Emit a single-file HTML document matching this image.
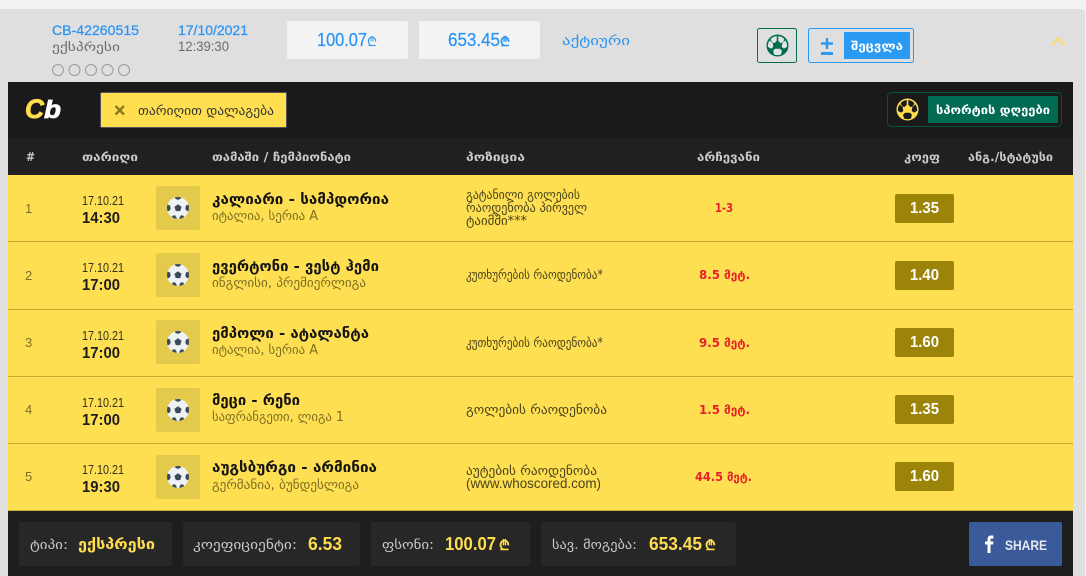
<!DOCTYPE html>
<html lang="ka"><head><meta charset="utf-8"><title>CB-42260515</title>
<style>
html,body{margin:0;padding:0;background:#f2f2f2;width:1086px;height:576px;overflow:hidden}
svg{display:block;position:absolute;left:0;top:0}
text{font-family:"Liberation Sans","DejaVu Sans",sans-serif;white-space:pre}
.g{font-family:"DejaVu Sans","Liberation Sans",sans-serif}
.b{font-weight:bold}
.blue{fill:#2a94f4}.grey{fill:#6b6b6b}
.m{stroke:currentColor;stroke-width:.25px}
.h{font-size:12px;fill:#c9c9c9;font-family:"DejaVu Sans",sans-serif;font-weight:bold}
.t{font-size:14px;font-weight:bold;fill:#141414;font-family:"DejaVu Sans",sans-serif}
.s{font-size:13px;fill:#7d6f22;font-family:"DejaVu Sans",sans-serif}
.p{font-size:13px;fill:#4a431a;font-family:"DejaVu Sans",sans-serif}
.d{font-size:13px;fill:#33301c}
.tm{font-size:16px;font-weight:bold;fill:#1c1c1c}
.n{font-size:13px;fill:#7d6f22}
.v{font-size:12px;font-weight:bold;fill:#e8202a;font-family:"DejaVu Sans",sans-serif}
.o{font-size:16px;font-weight:bold;fill:#fff}
.fl{font-size:13px;fill:#c9c9c9;font-family:"DejaVu Sans",sans-serif}
.fv{font-size:18px;font-weight:bold;fill:#ffdd4e}
</style></head><body>
<svg width="1086" height="576" viewBox="0 0 1086 576" xmlns="http://www.w3.org/2000/svg">
<defs>
<symbol id="ring" viewBox="0 0 24 24">
<circle cx="12" cy="12" r="11.5" fill="currentColor"/>
<path d="M12.800 2.100a10 10 0 0 1 6.300 3.200l-1.300 3.500-2.800.6-2.200-2.400z"/>
<path d="M11.200 2.100a10 10 0 0 0-6.300 3.200l1.300 3.500 2.800.6 2.200-2.400z"/>
<path d="M20.100 6.600a10 10 0 0 1 1.900 6.800l-3.300 1.800-2.300-1.600.5-3.700z"/>
<path d="M3.900 6.600a10 10 0 0 0-1.900 6.800l3.300 1.800 2.300-1.600-.5-3.700z"/>
<path d="M8.400 21.400a10 10 0 0 0 7.200 0l1-3.900-2-2.100H9.400l-2 2.100z"/>
<path d="M12 8.500l3.300 2.400-1.250 3.800h-4.100L8.700 10.900z" fill="currentColor"/>
</symbol>
<clipPath id="cb"><circle cx="12" cy="12" r="11"/></clipPath>
<symbol id="ball" viewBox="0 0 24 24">
<circle cx="12" cy="12" r="11" fill="#eef2f4"/>
<g clip-path="url(#cb)" fill="#3c4a57">
<path d="M12 8.300l3.600 2.600-1.400 4.200H9.800l-1.400-4.200z"/>
<path d="M8.500 0h7l-.8 2.700-2.700 1.200-2.700-1.200z"/>
<path d="M24 8v6.500l-2.800.8-1.900-2.300.6-3.500z"/>
<path d="M0 8v6.500l2.800.8 1.900-2.300-.6-3.500z"/>
<path d="M5.500 23l.8-3.200 2.800-.5 1.600 2.600-.3 2.500z"/>
<path d="M18.500 23l-.8-3.200-2.800-.5-1.600 2.600.3 2.500z"/>
</g>
</symbol>
</defs>

<rect width="1086" height="576" fill="#f2f2f2"/>
<path d="M0 9H1082a3 3 0 0 1 3 3V576H0z" fill="#dfdfdf"/>

<text x="52" y="35" font-size="14" class="blue m" color="#2a94f4" textLength="87" lengthAdjust="spacingAndGlyphs">CB-42260515</text>
<text x="52" y="51" font-size="12" class="grey g" textLength="68" lengthAdjust="spacingAndGlyphs">ექსპრესი</text>
<g fill="none" stroke="#9a9a9a"><circle cx="58" cy="70" r="5.5"/><circle cx="74.500" cy="70" r="5.5"/><circle cx="91" cy="70" r="5.500"/><circle cx="107.500" cy="70" r="5.500"/><circle cx="124" cy="70" r="5.500"/></g>
<text x="178" y="35" font-size="14" class="blue m" color="#2a94f4" textLength="70" lengthAdjust="spacingAndGlyphs">17/10/2021</text>
<text x="178" y="51" font-size="14" class="grey" textLength="51" lengthAdjust="spacingAndGlyphs">12:39:30</text>

<rect x="287" y="21" width="121" height="38" rx="2" fill="#f3f3f3"/>
<rect x="419" y="21" width="121" height="38" rx="2" fill="#f3f3f3"/>
<text x="317" y="46" font-size="18" class="blue m" color="#2a94f4" textLength="50" lengthAdjust="spacingAndGlyphs">100.07</text>
<text x="367" y="46" font-size="13" class="blue g">₾</text>
<text x="448" y="46" font-size="18" class="blue m" color="#2a94f4" textLength="52" lengthAdjust="spacingAndGlyphs">653.45</text>
<text x="500" y="46" font-size="13" class="blue g b">₾</text>
<text x="562" y="45" font-size="13" class="blue g" textLength="68" lengthAdjust="spacingAndGlyphs">აქტიური</text>

<rect x="757.500" y="28.500" width="39" height="34" rx="2" fill="none" stroke="#006b52"/>
<use href="#ring" x="766" y="34" width="23" height="23" fill="#dfe6e2" color="#006b52"/>
<rect x="808.500" y="28.500" width="105" height="34" rx="2" fill="none" stroke="#2b9af3"/>
<rect x="844" y="32" width="66" height="27" fill="#2b9af3"/>
<path d="M821 43.500h12M827 38v11" stroke="#2b9af3" stroke-width="2.400" fill="none"/>
<rect x="821" y="52" width="12" height="3" fill="#2b9af3"/>
<text x="851" y="50" font-size="12" font-weight="bold" fill="#fff" class="g" textLength="52" lengthAdjust="spacingAndGlyphs">შეცვლა</text>
<path d="M1052 45l6.500-6.500 6.500 6.500" fill="none" stroke="#ffdd4e" stroke-width="1.800"/>

<rect x="8" y="82" width="1065" height="56" fill="#1a1a1a"/>
<rect x="8" y="138" width="1065" height="37" fill="#202020"/>
<text x="25" y="118" font-size="27" font-weight="bold" font-style="italic" fill="#ffdd4e" stroke="#ffdd4e" stroke-width=".8" textLength="19" lengthAdjust="spacingAndGlyphs">C</text>
<text x="44" y="118" font-size="25" font-weight="bold" font-style="italic" fill="#fff" stroke="#fff" stroke-width=".8" textLength="17" lengthAdjust="spacingAndGlyphs">b</text>

<rect x="100.500" y="92.500" width="186" height="35" rx="1" fill="#ffdf4f" stroke="#555"/>
<path d="M115.500 106l8.500 8.500M124 106l-8.500 8.500" stroke="#8a7a1e" stroke-width="2.400" fill="none"/>
<text x="138" y="115" font-size="13" fill="#333" class="g" textLength="136" lengthAdjust="spacingAndGlyphs">თარიღით დალაგება</text>

<rect x="887.500" y="92.500" width="174" height="34" rx="4" fill="none" stroke="#00533f"/>
<use href="#ring" x="896" y="98" width="23" height="23" fill="#1a1a1a" color="#ffdd4e"/>
<rect x="928" y="96" width="130" height="27" fill="#006b52"/>
<text x="936" y="114" font-size="12" font-weight="bold" fill="#fff" class="g" textLength="114" lengthAdjust="spacingAndGlyphs">სპორტის დღეები</text>

<text x="26" y="161" class="h" textLength="9" lengthAdjust="spacingAndGlyphs">#</text>
<text x="82" y="161" class="h" textLength="56" lengthAdjust="spacingAndGlyphs">თარიღი</text>
<text x="212" y="161" class="h" textLength="139" lengthAdjust="spacingAndGlyphs">თამაში / ჩემპიონატი</text>
<text x="466" y="161" class="h" textLength="59" lengthAdjust="spacingAndGlyphs">პოზიცია</text>
<text x="697" y="161" class="h" textLength="63" lengthAdjust="spacingAndGlyphs">არჩევანი</text>
<text x="904" y="161" class="h" textLength="36" lengthAdjust="spacingAndGlyphs">კოეფ</text>
<text x="968" y="161" class="h" textLength="85" lengthAdjust="spacingAndGlyphs">ანგ./სტატუსი</text>

<rect x="8" y="175" width="1065" height="336" fill="#ffdf52"/>
<g fill="#c9ac2f"><rect x="8" y="241" width="1065" height="1"/><rect x="8" y="309" width="1065" height="1"/><rect x="8" y="376" width="1065" height="1"/><rect x="8" y="443" width="1065" height="1"/><rect x="8" y="510" width="1065" height="1"/></g>

<g fill="#e3ca4b">
<rect x="156" y="186" width="44" height="44" rx="2"/><rect x="156" y="253" width="44" height="44" rx="2"/><rect x="156" y="320" width="44" height="44" rx="2"/><rect x="156" y="388" width="44" height="44" rx="2"/><rect x="156" y="455" width="44" height="44" rx="2"/>
</g>
<use href="#ball" x="166" y="196" width="24" height="24"/><use href="#ball" x="166" y="263" width="24" height="24"/><use href="#ball" x="166" y="330" width="24" height="24"/><use href="#ball" x="166" y="398" width="24" height="24"/><use href="#ball" x="166" y="465" width="24" height="24"/>

<g fill="#9c8409">
<rect x="895" y="194" width="59" height="29" rx="2"/><rect x="895" y="261" width="59" height="29" rx="2"/><rect x="895" y="328" width="59" height="29" rx="2"/><rect x="895" y="395" width="59" height="29" rx="2"/><rect x="895" y="462" width="59" height="29" rx="2"/>
</g>
<text x="910" y="213" class="o" textLength="29" lengthAdjust="spacingAndGlyphs">1.35</text>
<text x="910" y="280" class="o" textLength="29" lengthAdjust="spacingAndGlyphs">1.40</text>
<text x="910" y="347" class="o" textLength="29" lengthAdjust="spacingAndGlyphs">1.60</text>
<text x="910" y="414" class="o" textLength="29" lengthAdjust="spacingAndGlyphs">1.35</text>
<text x="910" y="481" class="o" textLength="29" lengthAdjust="spacingAndGlyphs">1.60</text>

<text x="25" y="213" class="n">1</text>
<text x="82" y="205" class="d" textLength="42" lengthAdjust="spacingAndGlyphs">17.10.21</text>
<text x="82" y="223" class="tm" textLength="38" lengthAdjust="spacingAndGlyphs">14:30</text>
<text x="212" y="204" class="t" textLength="177" lengthAdjust="spacingAndGlyphs">კალიარი - სამპდორია</text>
<text x="212" y="220" class="s" textLength="106" lengthAdjust="spacingAndGlyphs">იტალია, სერია A</text>
<text x="466" y="199" class="p" textLength="114" lengthAdjust="spacingAndGlyphs">გატანილი გოლების</text>
<text x="466" y="212" class="p" textLength="121" lengthAdjust="spacingAndGlyphs">რაოდენობა პირველ</text>
<text x="466" y="225" class="p" textLength="61" lengthAdjust="spacingAndGlyphs">ტაიმში***</text>
<text x="715" y="212" class="v" textLength="18" lengthAdjust="spacingAndGlyphs">1-3</text>

<text x="25" y="280" class="n">2</text>
<text x="82" y="272" class="d" textLength="42" lengthAdjust="spacingAndGlyphs">17.10.21</text>
<text x="82" y="290" class="tm" textLength="38" lengthAdjust="spacingAndGlyphs">17:00</text>
<text x="212" y="271" class="t" textLength="167" lengthAdjust="spacingAndGlyphs">ევერტონი - ვესტ ჰემი</text>
<text x="212" y="287" class="s" textLength="154" lengthAdjust="spacingAndGlyphs">ინგლისი, პრემიერლიგა</text>
<text x="466" y="279" class="p" textLength="137" lengthAdjust="spacingAndGlyphs">კუთხურების რაოდენობა*</text>
<text x="699" y="279" class="v" textLength="51" lengthAdjust="spacingAndGlyphs">8.5 მეტ.</text>

<text x="25" y="347" class="n">3</text>
<text x="82" y="340" class="d" textLength="42" lengthAdjust="spacingAndGlyphs">17.10.21</text>
<text x="82" y="358" class="tm" textLength="38" lengthAdjust="spacingAndGlyphs">17:00</text>
<text x="212" y="338" class="t" textLength="157" lengthAdjust="spacingAndGlyphs">ემპოლი - ატალანტა</text>
<text x="212" y="354" class="s" textLength="106" lengthAdjust="spacingAndGlyphs">იტალია, სერია A</text>
<text x="466" y="347" class="p" textLength="137" lengthAdjust="spacingAndGlyphs">კუთხურების რაოდენობა*</text>
<text x="699" y="347" class="v" textLength="51" lengthAdjust="spacingAndGlyphs">9.5 მეტ.</text>

<text x="25" y="414" class="n">4</text>
<text x="82" y="407" class="d" textLength="42" lengthAdjust="spacingAndGlyphs">17.10.21</text>
<text x="82" y="425" class="tm" textLength="38" lengthAdjust="spacingAndGlyphs">17:00</text>
<text x="212" y="405" class="t" textLength="88" lengthAdjust="spacingAndGlyphs">მეცი - რენი</text>
<text x="212" y="421" class="s" textLength="132" lengthAdjust="spacingAndGlyphs">საფრანგეთი, ლიგა 1</text>
<text x="466" y="414" class="p" textLength="141" lengthAdjust="spacingAndGlyphs">გოლების რაოდენობა</text>
<text x="699" y="414" class="v" textLength="51" lengthAdjust="spacingAndGlyphs">1.5 მეტ.</text>

<text x="25" y="481" class="n">5</text>
<text x="82" y="474" class="d" textLength="42" lengthAdjust="spacingAndGlyphs">17.10.21</text>
<text x="82" y="492" class="tm" textLength="38" lengthAdjust="spacingAndGlyphs">19:30</text>
<text x="212" y="472" class="t" textLength="165" lengthAdjust="spacingAndGlyphs">აუგსბურგი - არმინია</text>
<text x="212" y="489" class="s" textLength="147" lengthAdjust="spacingAndGlyphs">გერმანია, ბუნდესლიგა</text>
<text x="466" y="475" class="p" textLength="131" lengthAdjust="spacingAndGlyphs">აუტების რაოდენობა</text>
<text x="466" y="488" font-size="14" fill="#4a431a" textLength="135" lengthAdjust="spacingAndGlyphs">(www.whoscored.com)</text>
<text x="695" y="481" class="v" textLength="57" lengthAdjust="spacingAndGlyphs">44.5 მეტ.</text>

<rect x="8" y="511" width="1065" height="65" fill="#1e1e1e"/>
<g fill="#272727">
<rect x="19" y="522" width="153" height="44" rx="2"/><rect x="183" y="522" width="177" height="44" rx="2"/><rect x="371" y="522" width="159" height="44" rx="2"/><rect x="541" y="522" width="195" height="44" rx="2"/>
</g>
<text x="30" y="549" class="fl" textLength="38" lengthAdjust="spacingAndGlyphs">ტიპი:</text>
<text x="78" y="549" font-size="14" font-weight="bold" fill="#ffdd4e" class="g" textLength="77" lengthAdjust="spacingAndGlyphs">ექსპრესი</text>
<text x="193" y="549" class="fl" textLength="104" lengthAdjust="spacingAndGlyphs">კოეფიციენტი:</text>
<text x="308" y="550" class="fv" textLength="34" lengthAdjust="spacingAndGlyphs">6.53</text>
<text x="382" y="549" class="fl" textLength="52" lengthAdjust="spacingAndGlyphs">ფსონი:</text>
<text x="445" y="550" class="fv" textLength="51" lengthAdjust="spacingAndGlyphs">100.07</text>
<text x="499" y="550" font-size="14" font-weight="bold" fill="#ffdd4e" class="g">₾</text>
<text x="552" y="549" class="fl" textLength="85" lengthAdjust="spacingAndGlyphs">სავ. მოგება:</text>
<text x="649" y="550" class="fv" textLength="53" lengthAdjust="spacingAndGlyphs">653.45</text>
<text x="705" y="550" font-size="14" font-weight="bold" fill="#ffdd4e" class="g">₾</text>

<rect x="969" y="522" width="93" height="44" rx="2" fill="#3b5a9a"/>
<path d="M987.500 553v-8.500h-2.500v-3h2.500v-2.200c0-2.500 1.500-3.800 3.700-3.800h2.300v3h-1.500c-1.100 0-1.500.5-1.500 1.400v1.600h3l-.5 3h-2.500v8.500z" fill="#fff"/>
<text x="1005" y="550" font-size="14" font-weight="bold" fill="#e4e8f0" textLength="42" lengthAdjust="spacingAndGlyphs">SHARE</text>
</svg>
</body></html>
